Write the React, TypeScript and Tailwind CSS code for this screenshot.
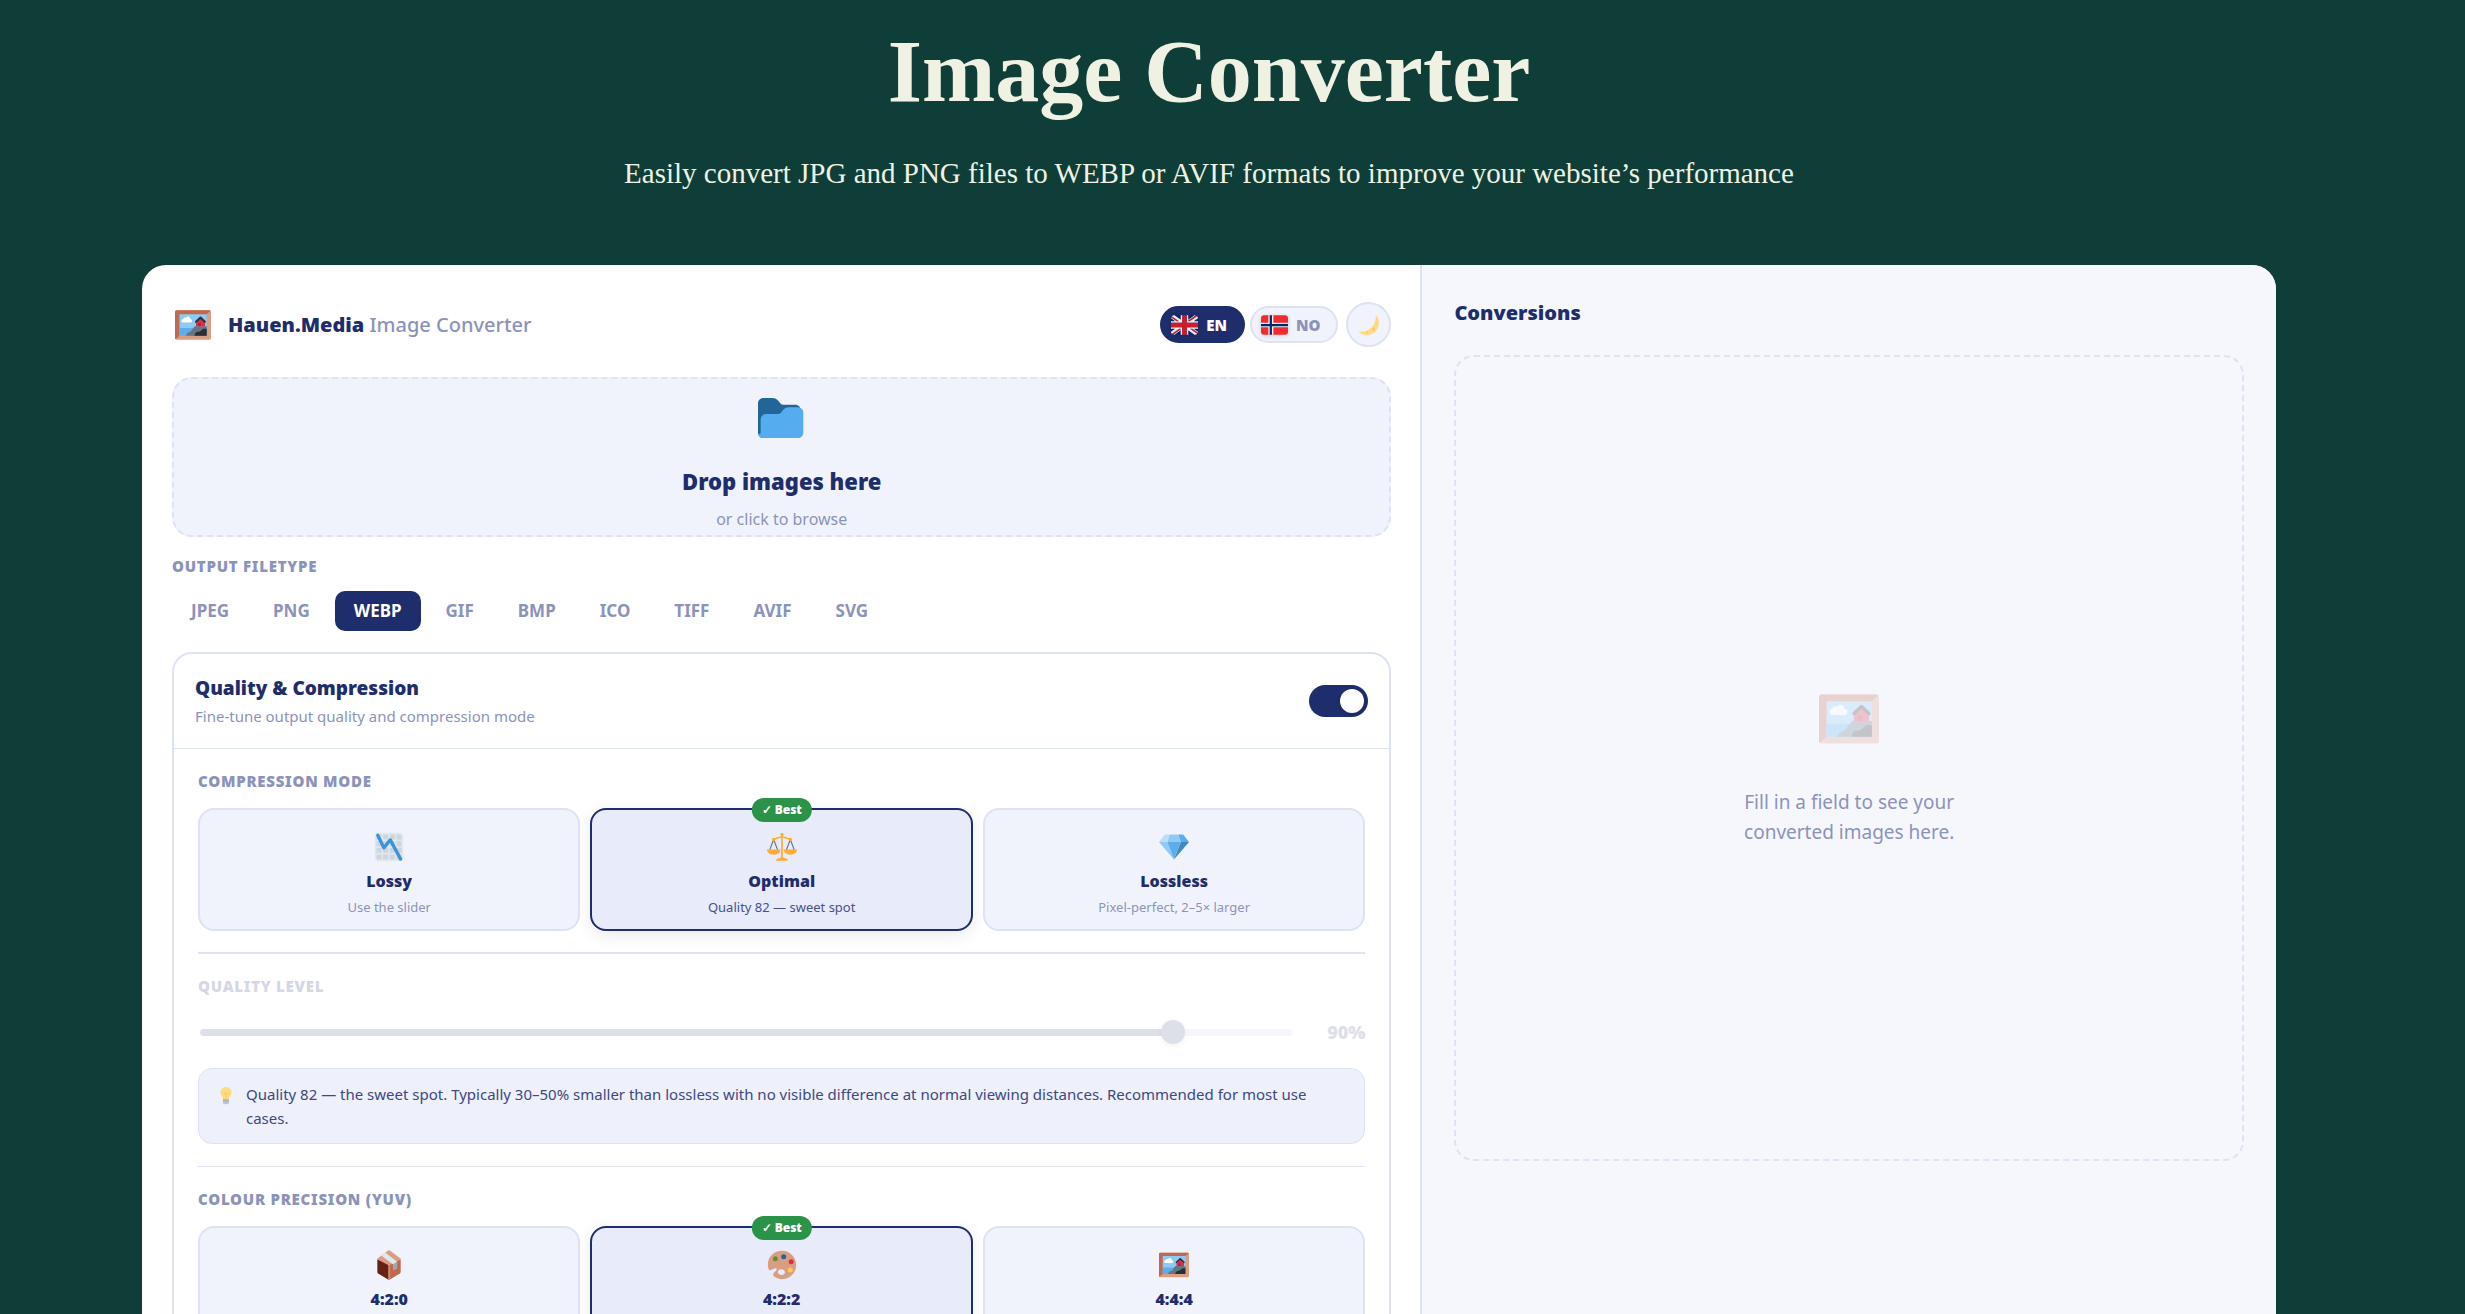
import React, { useState } from 'react';
import clsx from 'clsx';

interface IconProps {
  className?: string;
}

const FrameIcon: React.FC<IconProps> = ({ className }) => (
  <svg viewBox="0 0 36 36" className={className} aria-hidden="true">
    <rect y="3.3" width="36" height="29.4" rx="1.6" fill="#DA9F83" />
    <path fill="#C1694F" d="M35.5 3.8 31.7 7.3 4.5 28.7.5 32.2Q0 31.800 0 31V4.900Q0 3.300 1.600 3.300H34.400Q35.100 3.300 35.500 3.800z" />
    <rect x="4.500" y="7.300" width="27.200" height="21.400" rx=".5" fill="#8CCAF7" />
    <path fill="#5DADEC" d="M4.500 20.900h27.200v7.300q0 .5-.5.5H5q-.5 0-.5-.5z" />
    <g fill="#FFF">
      <rect x="6.300" y="11.900" width="10.800" height="3.700" rx="1.850" />
      <circle cx="9.800" cy="12" r="1.600" />
      <circle cx="13" cy="11.700" r="2.200" />
    </g>
    <path fill="#66757F" d="M10.600 28.700c1.200-1.400 1.700-2.900 3.200-3.400 1.400-.3 2-.6 2.900-2 .7-1.600 1.800-2 3-4.100h12v9.500z" />
    <path fill="#292F33" d="M19.300 28.700c.8-1.600 1.200-3.300 2.700-3.600 1.400-.3 2.500-.2 3.700-1 1.200-.900 1.600-2.200 3-2.300h3v6.400q0 .5-.5.5z" />
    <path fill="#DD2E44" d="m25.500 11.300 4.500 4.300v3.600h-9v-3.600z" />
    <path fill="#BE1931" d="M23.400 16h2.200v3.200h-2.200z" />
    <path fill="none" stroke="#292F33" strokeWidth="2" strokeLinecap="round" strokeLinejoin="round" d="m21 14.700 4.500-4.200 4.400 4.200" />
  </svg>
);

const FolderIcon: React.FC<IconProps> = ({ className }) => (
  <svg viewBox="0 0 36 36" className={className} aria-hidden="true">
    <path fill="#226699" d="M0 29c0 2.209 1.791 4 4 4h24c2.209 0 4-1.791 4-4V12c0-2.209-1.791-4-4-4h-9c-3.562 0-3-5-8.438-5H4C1.791 3 0 4.791 0 7v22z" />
    <path fill="#55ACEE" d="M30 10h-6.562C18 10 18.562 15 15 15H6c-2.209 0-4 1.791-4 4v10c0 .553-.448 1-1 1s-1-.447-1-1c0 2.209 1.791 4 4 4h26c2.209 0 4-1.791 4-4V14c0-2.209-1.791-4-4-4z" />
  </svg>
);

const MoonIcon: React.FC<IconProps> = ({ className }) => (
  <svg viewBox="0 0 36 36" className={className} aria-hidden="true">
    <path fill="#FFD983" d="M30.312.776C32 19 20 32 .776 30.312c8.199 7.717 21.091 7.588 29.107-.429C37.9 21.867 38.03 8.975 30.312.776z" />
    <path fill="#FFCC4D" d="M30.705 15.915c-.453.454-.453 1.186 0 1.64.453.453 1.186.453 1.64 0 .453-.453.453-1.187 0-1.64-.454-.453-1.187-.453-1.64 0zm-16.022 14.38c-.682.681-.682 1.783 0 2.465.68.682 1.784.682 2.464 0 .681-.682.681-1.784 0-2.465-.68-.682-1.784-.682-2.464 0zm13.968-2.147c-1.135 1.135-2.974 1.135-4.108 0-1.135-1.135-1.135-2.975 0-4.107 1.135-1.136 2.974-1.136 4.108 0 1.135 1.133 1.135 2.973 0 4.107z" />
  </svg>
);

const FlagUk: React.FC<IconProps> = ({ className }) => (
  <svg viewBox="0 5 36 26" className={className} aria-hidden="true">
    <path fill="#00247D" d="M0 9.059V13h5.628zM4.664 31H13v-5.837zM23 25.164V31h8.335zM0 23v3.941L5.63 23zM31.337 5H23v5.837zM36 26.942V23h-5.631zM36 13V9.059L30.371 13zM13 5H4.664L13 10.837z" />
    <path fill="#CF1B2B" d="M25.14 23l9.712 6.801c.471-.479.808-1.082.99-1.749L28.627 23H25.14zM13 23h-2.141l-9.711 6.8c.521.53 1.189.909 1.938 1.085L13 23.943V23zm10-10h2.141l9.711-6.8c-.521-.53-1.188-.909-1.937-1.085L23 12.057V13zm-12.141 0L1.148 6.2C.677 6.68.34 7.282.157 7.949L7.372 13h3.487z" />
    <path fill="#EEE" d="M36 21H21v10h2v-5.836L31.335 31H32c1.117 0 2.126-.461 2.852-1.199L25.14 23h3.487l7.215 5.052c.093-.337.158-.686.158-1.052v-.058L30.369 23H36v-2zM0 21v2h5.63L0 26.941V27c0 1.091.439 2.078 1.148 2.8l9.711-6.8H13v.943l-9.914 6.941c.294.07.598.116.914.116h.664L13 25.163V31h2V21H0zM36 9c0-1.091-.439-2.078-1.148-2.8L25.141 13H23v-.943l9.915-6.942C32.62 5.046 32.316 5 32 5h-.663L23 10.837V5h-2v10h15v-2h-5.629L36 9.059V9zM13 5v5.837L4.664 5H4c-1.118 0-2.126.461-2.852 1.2l9.711 6.8H7.372L.157 7.949C.065 8.286 0 8.634 0 9v.059L5.628 13H0v2h15V5h-2z" />
    <path fill="#CF1B2B" d="M21 15V5h-6v10H0v6h15v10h6V21h15v-6z" />
  </svg>
);

const FlagNorway: React.FC<IconProps> = ({ className }) => (
  <svg viewBox="0 5 36 26" className={className} aria-hidden="true">
    <rect y="5" width="36" height="26" rx="4" fill="#EF2B2D" />
    <path fill="#EEE" d="M16.500 5H9.800v10H0v6h9.800v10h6.700V21H36v-6H16.500z" />
    <path fill="#002868" d="M14.600 5h-3v11.500H0v3h11.600V31h3V19.500H36v-3H14.600z" />
  </svg>
);

const ChartIcon: React.FC<IconProps> = ({ className }) => (
  <svg viewBox="0 0 36 36" className={className} aria-hidden="true">
    <rect x="2" y="2" width="32" height="32" rx="3" fill="#CCD6DD" />
    <path fill="#E1E8ED" d="M31 1H5C2.791 1 1 2.791 1 5v26c0 2.209 1.791 4 4 4h26c2.209 0 4-1.791 4-4V5c0-2.209-1.791-4-4-4zm0 2c1.103 0 2 .897 2 2v4h-6V3h4zm-4 16h6v6h-6v-6zm0-2v-6h6v6h-6zM25 3v6h-6V3h6zm-6 8h6v6h-6v-6zm0 8h6v6h-6v-6zM17 3v6h-6V3h6zm-6 8h6v6h-6v-6zm0 8h6v6h-6v-6zM3 5c0-1.103.897-2 2-2h4v6H3V5zm0 6h6v6H3v-6zm0 8h6v6H3v-6zm2 14c-1.103 0-2-.897-2-2v-4h6v6H5zm6 0v-6h6v6h-6zm8 0v-6h6v6h-6zm12 0h-4v-6h6v4c0 1.103-.897 2-2 2z" />
    <path fill="none" stroke="#3B94D9" strokeWidth="4" strokeLinecap="round" strokeLinejoin="round" d="m4.500 4 7.300 15L19.500 9.500l12.500 23" />
  </svg>
);

const ScalesIcon: React.FC<IconProps> = ({ className }) => (
  <svg viewBox="0 0 36 36" className={className} aria-hidden="true">
    <path fill="none" stroke="#66757F" strokeWidth="1.400" d="M8 9 3.300 21.500M8 9l4.700 12.500M28 9l-4.700 12.500M28 9l4.700 12.500" />
    <path fill="#FFAC33" d="M0 21h16c0 3.500-3.200 6.200-8 6.200S0 24.500 0 21zM20 21h16c0 3.500-3.200 6.200-8 6.200S20 24.500 20 21z" />
    <path fill="none" stroke="#FFAC33" strokeWidth="2" strokeLinecap="round" d="M8 8.500c4-.2 6-2.500 10-2.500s6 2.300 10 2.500" />
    <path fill="#FFAC33" d="M17 3h2v28h-2z" />
    <circle cx="18" cy="3" r="2" fill="#FFAC33" />
    <circle cx="8" cy="9" r="2" fill="#FFAC33" />
    <circle cx="28" cy="9" r="2" fill="#FFAC33" />
    <path fill="#FFAC33" d="M11 34.500v-1c0-1.200 2-1.500 4-2.200.9-.3 1.600-1.300 3-1.300s2.100 1 3 1.300c2 .7 4 1 4 2.200v1z" />
  </svg>
);

const GemIcon: React.FC<IconProps> = ({ className }) => (
  <svg viewBox="0 0 36 36" className={className} aria-hidden="true">
    <path fill="#BDDDF4" d="M13 3H7l-7 9h10z" />
    <path fill="#5DADEC" d="M36 12l-7-9h-6l3 9z" />
    <path fill="#4289C1" d="M26 12h10L18 33z" />
    <path fill="#8CCAF7" d="M10 12H0l18 21zm3-9l-3 9h16l-3-9z" />
    <path fill="#5DADEC" d="M18 33l-8-21h16z" />
  </svg>
);

const BoxIcon: React.FC<IconProps> = ({ className }) => (
  <svg viewBox="0 0 36 36" className={className} aria-hidden="true">
    <path fill="#662113" d="M4 11v15.500q0 1 .9 1.600L18 36V17z" />
    <path fill="#C1694F" d="M32 11v15.500q0 1-.9 1.600L18 36V17z" />
    <path fill="#D99E82" d="M18 18.500 4.500 11.500Q3.500 10.700 4.500 9.900L17 .5q1-.7 2 0l12.500 9.400q1 .8 0 1.600z" />
    <path fill="#D99E82" d="M17.200 17h1.600v19l-.8.300-.8-.3z" />
    <path fill="#CCD6DD" d="m8.800 6.700 4.700-3.500 14.200 11.200v6.800q0 .6-.5.900l-3.600 2q-.7.300-.7-.4v-6.500z" />
    <path fill="#E1E8ED" d="m8.800 6.700 4.700-3.500 14.200 11-4.800 3z" />
    <path fill="#99AAB5" d="m22.900 17.200 4.800-3v7q0 .6-.5.900l-3.600 2q-.7.300-.7-.4z" />
  </svg>
);

const PaletteIcon: React.FC<IconProps> = ({ className }) => (
  <svg viewBox="0 0 36 36" className={className} aria-hidden="true">
    <path
      fill="#D99E82"
      fillRule="evenodd"
      d="M18 1C8.600 1 1 8.300 1 17.500c0 2 .3 3.900 1 5.700.5 1.300 2.200 1.400 3.600.6 2-1.200 4.600-2.600 5.600-1.600 1.200 1.300-.9 3.200-2.700 5.100-1.300 1.500-1.700 3.200-.2 4.300C11.100 33.800 14.400 35 18 35c9.400 0 17-7.600 17-17S27.400 1 18 1zm-1 22c2.600 0 4.500 1.600 4.500 3.700S19.800 30 17.500 30 13 28.500 13 26.500 14.700 23 17 23z"
    />
    <circle cx="10" cy="10.500" r="3" fill="#5C913B" />
    <circle cx="20" cy="8" r="3" fill="#226699" />
    <circle cx="29" cy="14" r="3" fill="#DD2E44" />
    <circle cx="28" cy="24" r="3" fill="#FFCC4D" />
  </svg>
);

const BulbIcon: React.FC<IconProps> = ({ className }) => (
  <svg viewBox="0 0 36 36" className={className} aria-hidden="true">
    <path fill="#FFD983" d="M29 11.06c0 6.439-5 7.439-5 13.44 0 3.098-3.123 3.359-5.5 3.359-2.053 0-6.586-.779-6.586-3.361C11.914 18.5 7 17.5 7 11.06 7 5.029 12.285.14 18.083.14 23.883.14 29 5.029 29 11.06z" />
    <path fill="#CCD6DD" d="M22.167 32.5c0 .828-2.234 2.5-4.167 2.5-1.933 0-4.167-1.672-4.167-2.5z" />
    <path fill="#FFCC4D" d="M22.707 10.293c-.391-.391-1.023-.391-1.414 0L18 13.586l-3.293-3.293c-.391-.391-1.023-.391-1.414 0s-.391 1.023 0 1.414L17 15.414V26c0 .553.447 1 1 1s1-.447 1-1V15.414l3.707-3.707c.391-.391.391-1.023 0-1.414z" />
    <path fill="#99AAB5" d="M24 31c0 1.104-.896 2-2 2h-8c-1.104 0-2-.896-2-2v-6h12v6z" />
    <path fill="none" stroke="#CCD6DD" strokeWidth="1.500" strokeLinecap="round" d="m12.500 29 11-1.500M12.500 32l11-1.500" />
  </svg>
);

const formats = ['JPEG', 'PNG', 'WEBP', 'GIF', 'BMP', 'ICO', 'TIFF', 'AVIF', 'SVG'];

interface TileOption {
  id: string;
  icon: React.FC<IconProps>;
  sub?: string;
  best?: boolean;
}

const modes: TileOption[] = [
  { id: 'Lossy', icon: ChartIcon, sub: 'Use the slider' },
  { id: 'Optimal', icon: ScalesIcon, sub: 'Quality 82 — sweet spot', best: true },
  { id: 'Lossless', icon: GemIcon, sub: 'Pixel-perfect, 2–5× larger' },
];

const precisions: TileOption[] = [
  { id: '4:2:0', icon: BoxIcon },
  { id: '4:2:2', icon: PaletteIcon, best: true },
  { id: '4:4:4', icon: FrameIcon },
];

const SectionLabel: React.FC<{ children: React.ReactNode; faded?: boolean }> = ({ children, faded }) => (
  <h3 className={clsx('text-[15px] leading-5 font-black tracking-wider uppercase', faded ? 'text-[#d5d7e6]' : 'text-[#8b93bb]')}>
    {children}
  </h3>
);

interface TilesProps {
  options: TileOption[];
  value: string;
  onChange: (id: string) => void;
}

const Tiles: React.FC<TilesProps> = ({ options, value, onChange }) => (
  <div className="mt-[17px] grid grid-cols-3 gap-[10px]">
    {options.map(({ id, icon: Icon, sub, best }) => {
      const active = id === value;
      return (
        <button
          key={id}
          type="button"
          aria-pressed={active}
          onClick={() => onChange(id)}
          className={clsx(
            'relative flex min-h-[123px] flex-col items-center rounded-2xl border-2 pt-[22px] pb-3',
            active ? 'border-[#1e2d6b] bg-[#e8ebfa] shadow-[0_4px_16px_rgba(30,45,107,0.1)]' : 'border-[#dde2f5] bg-[#f0f3fc]'
          )}
        >
          {best && (
            <span className="absolute -top-3 left-1/2 -translate-x-1/2 rounded-full bg-[#2b9348] px-[10px] text-[12px] leading-6 font-black whitespace-nowrap text-white">
              ✓ Best
            </span>
          )}
          <Icon className="size-[30px]" />
          <span className="mt-[7px] text-[16px] leading-6 font-black text-[#1e2d6b]">{id}</span>
          {sub && (
            <span className={clsx('mt-1 text-[13px] leading-5', active ? 'text-[#465288]' : 'text-[#8b93bb]')}>{sub}</span>
          )}
        </button>
      );
    })}
  </div>
);

export default function App() {
  const [lang, setLang] = useState('EN');
  const [format, setFormat] = useState('WEBP');
  const [enabled, setEnabled] = useState(true);
  const [mode, setMode] = useState('Optimal');
  const [precision, setPrecision] = useState('4:2:2');
  const [quality, setQuality] = useState(90);

  return (
    <div className="h-screen overflow-hidden bg-[#0e3e37] pr-[47px] font-['Noto_Sans','Open_Sans',sans-serif]">
      <header className="pt-7 text-center font-['Liberation_Serif',serif] text-[#eff2e3]">
        <h1 className="text-[88px] leading-[88px] font-bold">Image Converter</h1>
        <p className="mt-[37px] text-[29px] leading-10">
          Easily convert JPG and PNG files to WEBP or AVIF formats to improve your website’s performance
        </p>
      </header>

      <main className="mx-[142px] mt-18 grid grid-cols-[3fr_2fr] overflow-hidden rounded-3xl bg-white">
        <section className="min-w-0 border-r-2 border-[#dde2f5] pt-[37px] pr-[29px] pb-8 pl-[30px]">
          <div className="flex items-center">
            <FrameIcon className="mr-[17px] ml-[3px] size-9" />
            <h2 className="text-[20px] leading-7 font-medium text-[#8b93bb]">
              <strong className="font-black text-[#1e2d6b]">Hauen.Media</strong> Image Converter
            </h2>
            <div className="ml-auto flex items-center gap-[5px]">
              {[
                { code: 'EN', Flag: FlagUk },
                { code: 'NO', Flag: FlagNorway },
              ].map(({ code, Flag }) => (
                <button
                  key={code}
                  type="button"
                  onClick={() => setLang(code)}
                  className={clsx(
                    'flex h-[37px] items-center gap-2 rounded-full border-2 pr-4 pl-[9px] text-[15px] leading-5 font-black',
                    lang === code ? 'border-[#1e2d6b] bg-[#1e2d6b] text-white' : 'border-[#dde2f5] bg-[#f0f3fc] text-[#8b93bb]'
                  )}
                >
                  <Flag className="h-5 w-[27px] drop-shadow-sm" />
                  {code}
                </button>
              ))}
              <button
                type="button"
                aria-label="Toggle dark mode"
                className="ml-[3px] flex size-[45px] items-center justify-center rounded-full border-2 border-[#dde2f5] bg-[#f0f3fc]"
              >
                <MoonIcon className="size-[21px]" />
              </button>
            </div>
          </div>

          <label className="mt-[30px] flex h-40 cursor-pointer flex-col items-center rounded-[20px] border-2 border-dashed border-[#dde2f5] bg-[#f0f3fc] pt-[15px]">
            <FolderIcon className="size-12" />
            <span className="mt-[23px] text-[22px] leading-8 font-black text-[#1e2d6b]">Drop images here</span>
            <span className="mt-[10px] text-[16px] leading-6 text-[#8b93bb]">or click to browse</span>
            <input type="file" multiple accept="image/*" className="hidden" />
          </label>

          <div className="mt-[19px]">
            <SectionLabel>Output filetype</SectionLabel>
          </div>
          <div className="mt-[15px] flex flex-wrap gap-[6px]">
            {formats.map((name) => (
              <button
                key={name}
                type="button"
                onClick={() => setFormat(name)}
                className={clsx(
                  'h-10 rounded-[10px] px-[19px] text-[17px] leading-6 font-bold',
                  name === format ? 'bg-[#1e2d6b] text-white' : 'text-[#8b93bb]'
                )}
              >
                {name}
              </button>
            ))}
          </div>

          <div className="mt-[21px] rounded-[20px] border-2 border-[#dde2f5]">
            <div className="flex items-center justify-between border-b border-[#dde2f5] px-[21px] py-5">
              <div>
                <h2 className="text-[19px] leading-7 font-black text-[#1e2d6b]">Quality &amp; Compression</h2>
                <p className="mt-[2px] text-[15px] leading-6 text-[#8b93bb]">Fine-tune output quality and compression mode</p>
              </div>
              <input
                type="checkbox"
                role="switch"
                aria-label="Quality & Compression"
                checked={enabled}
                onChange={(e) => setEnabled(e.target.checked)}
                className="h-8 w-[59px] cursor-pointer appearance-none rounded-full bg-[#dde2f5] p-1 before:block before:size-6 before:rounded-full before:bg-white before:shadow checked:bg-[#1e2d6b] checked:before:ml-auto"
              />
            </div>

            <div className="px-6 pt-[22px] pb-6">
              <SectionLabel>Compression mode</SectionLabel>
              <Tiles options={modes} value={mode} onChange={setMode} />

              <div className="mt-[21px] border-t-2 border-[#dde2f5] pt-[22px]">
                <SectionLabel faded={mode !== 'Lossy'}>Quality level</SectionLabel>
                <div className="mt-6 flex h-6 items-center">
                  <input
                    type="range"
                    min={1}
                    max={100}
                    value={quality}
                    disabled={mode !== 'Lossy'}
                    onChange={(e) => setQuality(Number(e.target.value))}
                    aria-label="Quality level"
                    className="mx-[2px] h-[7px] min-w-0 flex-1 appearance-none rounded-full bg-[linear-gradient(to_right,#dddfe9_89%,#f6f7fc_89%)] [&::-webkit-slider-thumb]:size-6 [&::-webkit-slider-thumb]:appearance-none [&::-webkit-slider-thumb]:rounded-full [&::-webkit-slider-thumb]:bg-[#dddfe9] [&::-webkit-slider-thumb]:shadow-[0_2px_6px_rgba(30,45,107,0.06)]"
                  />
                  <output className="w-[70px] text-right text-[18px] leading-6 font-black text-[#dddfe9]">{quality}%</output>
                </div>
              </div>

              <div className="mt-6 flex rounded-[14px] border border-[#dde2f5] bg-[#eef0fb] px-[18px] py-[13px]">
                <BulbIcon className="mt-[5px] size-[18px] shrink-0" />
                <p className="ml-[11px] text-[15px] leading-6 text-[#3c4982]">
                  Quality 82 — the sweet spot. Typically 30–50% smaller than lossless with no visible difference at normal viewing
                  distances. Recommended for most use cases.
                </p>
              </div>

              <div className="mt-[22px] border-t border-[#dde2f5] pt-[22px]">
                <SectionLabel>Colour precision (YUV)</SectionLabel>
                <Tiles options={precisions} value={precision} onChange={setPrecision} />
              </div>
            </div>
          </div>
        </section>

        <aside className="bg-[#f5f7fd] px-8 pt-[34px]">
          <h2 className="text-[20px] leading-7 font-black text-[#1e2d6b]">Conversions</h2>
          <div className="mt-7 flex h-[806px] flex-col items-center justify-center rounded-[20px] border-2 border-dashed border-[#dde2f5] pt-5">
            <FrameIcon className="size-[60px] opacity-25" />
            <p className="mt-[38px] w-[240px] text-center text-[19px] leading-[30px] text-[#8b93bb]">
              Fill in a field to see your converted images here.
            </p>
          </div>
        </aside>
      </main>
    </div>
  );
}
